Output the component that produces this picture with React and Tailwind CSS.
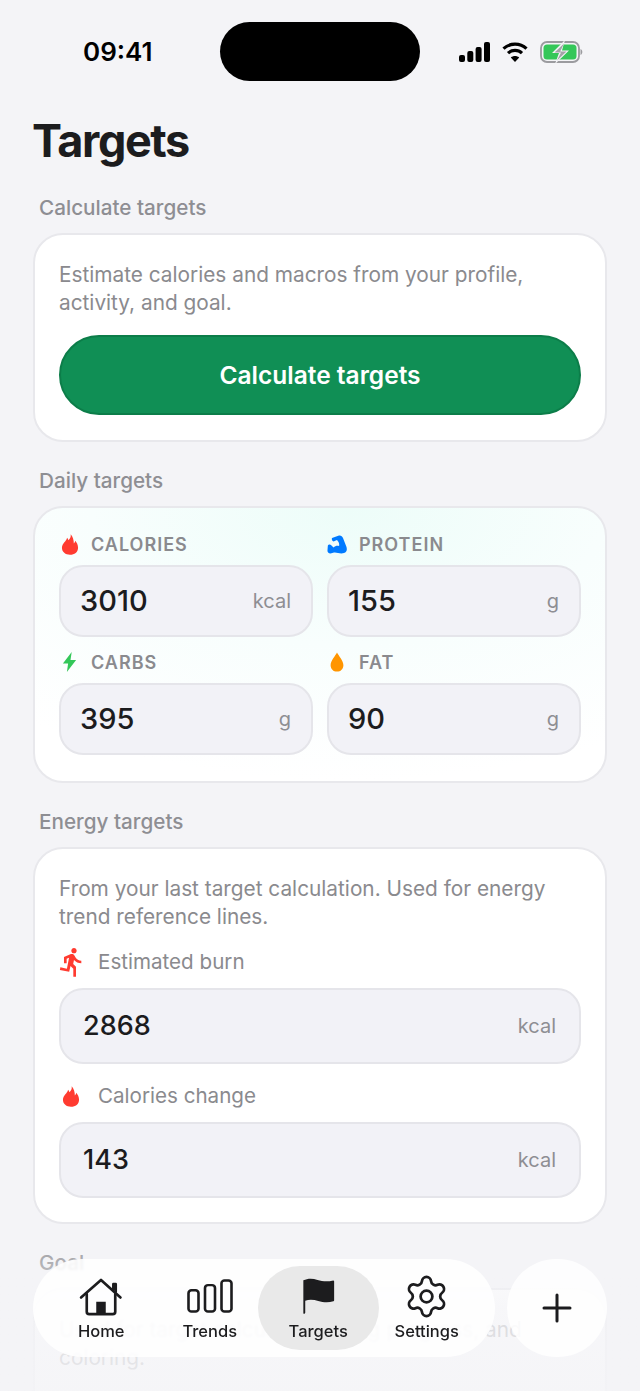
import React from 'react';
import { Settings } from 'lucide-react';
import { MdDirectionsRun } from 'react-icons/md';

const Flame = ({ className }) => (
  <svg viewBox="0 0 20 24" className={className} fill="currentColor">
    <path d="M10.800 0.200c.5 3.200-.9 5-2.500 6.800-.5-1-.9-1.900-1.700-2.700C6.300 8 .8 10.500.8 15.800c0 5 4 7.900 9.200 7.900s9.200-2.900 9.200-8c0-3.400-1.500-6.100-3.200-8-.2 1.400-.7 2.400-1.600 3.200C14.400 6.700 13.300 2.800 10.800 .2z" />
  </svg>
);

const Bolt = ({ className }) => (
  <svg viewBox="0 0 14 20" className={className} fill="currentColor">
    <path d="M9.200 0 .4 11.400h5.200L4.400 20 13.600 8H8z" />
  </svg>
);

const Drop = ({ className }) => (
  <svg viewBox="0 0 14 20" className={className} fill="currentColor">
    <path d="M7 .4C5.600 3.400.6 8.600.6 13.200.6 17 3.400 19.600 7 19.600s6.400-2.600 6.400-6.400C13.400 8.600 8.400 3.400 7 .4z" />
  </svg>
);

const Muscle = ({ className }) => (
  <svg viewBox="0 0 20 19" className={className} fill="currentColor">
    <path d="M5 3 12 .5c2-.3 3.200.8 4 2.500l3.500 9c.8 3 .2 5-2.500 6-4 1.300-7-1-10-.5l-3.500 1C1 18.500.3 17 .5 15l.3-4C1 9.500 3 9 4.500 10.500l2 2C8 11 10 10.500 12 11c.5-1.500 0-3-.5-4L10 5 6.500 6.500C5 6 4.500 4.500 5 3z" />
  </svg>
);

const Signal = () => (
  <svg width="31" height="20" viewBox="0 0 31 20" fill="#000">
    <rect x="0" y="13" width="6" height="7" rx="2" />
    <rect x="8.300" y="9" width="6" height="11" rx="2" />
    <rect x="16.600" y="5" width="6" height="15" rx="2" />
    <rect x="25" y="0" width="6" height="20" rx="2" />
  </svg>
);

const Wifi = () => (
  <svg width="26" height="20" viewBox="0 0 26 20" fill="none" stroke="#000" strokeWidth="3.200">
    <path d="M1.500 6.700C8 .6 18 .6 24.500 6.700" />
    <path d="M6 11.200c4-3.700 10-3.700 14 0" />
    <path d="M13 20l-4.200-4.600c2.400-2 6-2 8.400 0z" fill="#000" stroke="none" />
  </svg>
);

const Battery = () => (
  <svg width="43" height="22" viewBox="0 0 43 22">
    <rect x="1" y="1" width="38" height="20" rx="6" fill="none" stroke="#9b9b9f" strokeWidth="1.800" />
    <rect x="3.500" y="3.500" width="33" height="15" rx="3.500" fill="#34c759" />
    <path d="M40.500 8v6c1.200-.5 1.800-1.600 1.800-3s-.6-2.500-1.800-3z" fill="#9b9b9f" />
    <path d="M25 -1 12 12h7L15 23 29 9.500h-7z" fill="#f4f4f7" />
    <path d="M24 2.500 14.500 11.500h6.500L17 19.500 26.500 10.500h-6.300z" fill="#a3a3a8" />
  </svg>
);

const HomeIcon = () => (
  <svg width="44" height="38" viewBox="0 0 46 40" fill="none" stroke="#1c1c1e" strokeWidth="2.800" strokeLinejoin="round" strokeLinecap="round">
    <path d="M2 20.500 23 2l20.500 18.500" />
    <path d="M8 17v18.500c0 1.600 1 2.600 2.600 2.600h24.800c1.600 0 2.600-1 2.600-2.600V17" />
    <path d="M36 12V6.500h2.500v8" />
    <rect x="18" y="25" width="10" height="13" fill="#1c1c1e" stroke="none" />
  </svg>
);

const TrendsIcon = () => (
  <svg width="46" height="34" viewBox="0 0 46 36" preserveAspectRatio="none" fill="none" stroke="#1c1c1e" strokeWidth="2.600" className="mb-[3px]">
    <rect x="1.500" y="12" width="10" height="22.500" rx="3" />
    <rect x="18" y="6.500" width="10" height="28" rx="3" />
    <rect x="34.500" y="1.500" width="10" height="33" rx="3" />
  </svg>
);

const FlagIcon = () => (
  <svg width="33" height="36" viewBox="0 0 34 38" fill="#1c1c1e" className="mb-[2px]">
    <path d="M1 2.500C6 0 11 .4 16 2c5 1.600 10.500 2.200 16.500.6c.6 0 1 .3 1 .9v20c0 .6-.3.9-.8 1.100-5.500 1.700-11 1.100-16-.4-4.800-1.500-9.700-1.800-13.700-.2V36.500c0 .8-.6 1.300-1.300 1.300S1 37.300 1 36.500z" />
  </svg>
);

const FieldLabel = ({ icon, text }) => (
  <div className="flex items-center h-[24px]">
    <div className="w-[32px] flex items-center justify-start">{icon}</div>
    <span className="text-[18px] font-semibold tracking-[1px] text-[#8a8a8e] uppercase">{text}</span>
  </div>
);

const MacroField = ({ icon, label, value, unit }) => (
  <div className="flex flex-col gap-[9px]">
    <FieldLabel icon={icon} text={label} />
    <div className="h-[72px] rounded-[24px] bg-[#f2f2f7] border-2 border-[#e5e5ea] flex items-center justify-between pl-[19px] pr-[20px]">
      <span className="text-[29px] font-medium text-[#1c1c1e]">{value}</span>
      <span className="text-[20px] text-[#8e8e93]">{unit}</span>
    </div>
  </div>
);

const EnergyField = ({ icon, label, value }) => (
  <div className="flex flex-col gap-[13px]">
    <div className="flex items-center h-[26px]">
      <div className="w-[39px] flex items-center">{icon}</div>
      <span className="text-[20.600px] text-[#8a8a8e]">{label}</span>
    </div>
    <div className="h-[76px] rounded-[24px] bg-[#f2f2f7] border-2 border-[#e5e5ea] flex items-center justify-between pl-[22px] pr-[23px]">
      <span className="text-[27px] font-medium text-[#1c1c1e]">{value}</span>
      <span className="text-[20px] text-[#8e8e93]">kcal</span>
    </div>
  </div>
);

const SectionLabel = ({ children }) => (
  <div className="h-[26px] ml-[6px] text-[20.700px] leading-[26px] font-medium text-[#8e8e93]">{children}</div>
);

const NavItem = ({ icon, label, active }) => (
  <div className="relative flex-1 h-full flex flex-col items-center">
    {active && <div className="absolute inset-y-0 -inset-x-[6px] rounded-full bg-[#e9e9e9]" />}
    <div className="relative h-[50px] flex items-end justify-center">{icon}</div>
    <span className="relative mt-[5px] text-[16.500px] leading-[20px] font-medium text-[#1c1c1e]">{label}</span>
  </div>
);

export default function App() {
  return (
    <div className="relative h-[1391px] overflow-hidden bg-[#f4f4f7] font-['Inter',sans-serif]">
      <div className="h-[100px] relative flex items-start">
        <div className="absolute left-[83px] top-[36px] text-[26px] leading-[32px] font-semibold text-black">09:41</div>
        <div className="absolute left-[220px] top-[22px] w-[200px] h-[59px] rounded-full bg-black" />
        <div className="absolute left-[459px] top-[41px] flex items-center gap-[12px]">
          <Signal />
          <Wifi />
          <Battery />
        </div>
      </div>

      <div className="px-[33px]">
        <h1 className="h-[95px] pt-[14px] -ml-[1px] text-[45px] leading-[54px] font-bold tracking-[-1.400px] text-[#1c1c1e]">Targets</h1>

        <SectionLabel>Calculate targets</SectionLabel>
        <div className="mt-[12px] h-[209px] rounded-[30px] bg-white border-2 border-[#e8e8ec] px-[24px] pt-[26px]">
          <p className="text-[20.800px] leading-[28px] text-[#8a8a8e]">Estimate calories and macros from your profile, activity, and goal.</p>
          <button className="mt-[18px] w-full h-[80px] rounded-full bg-[#108f55] border-2 border-[#0c7d49] text-white text-[24.500px] font-semibold">Calculate targets</button>
        </div>

        <div className="mt-[26px]"><SectionLabel>Daily targets</SectionLabel></div>
        <div className="mt-[12px] h-[277px] rounded-[30px] border-2 border-[#e8e8ec] bg-[radial-gradient(ellipse_90%_100%_at_55%_0%,#edfdf9_0%,#f8fefd_50%,#ffffff_100%)] px-[24px] pt-[24px]">
          <div className="grid grid-cols-2 gap-x-[14px] gap-y-[13px]">
            <MacroField icon={<Flame className="w-[18px] h-[21px] text-[#ff3b30] ml-[2px]" />} label="Calories" value="3010" unit="kcal" />
            <MacroField icon={<Muscle className="w-[20px] h-[19px] text-[#007aff]" />} label="Protein" value="155" unit="g" />
            <MacroField icon={<Bolt className="w-[15px] h-[20px] text-[#34c759] ml-[3px]" />} label="Carbs" value="395" unit="g" />
            <MacroField icon={<Drop className="w-[14px] h-[20px] text-[#ff9500] ml-[3px]" />} label="Fat" value="90" unit="g" />
          </div>
        </div>

        <div className="mt-[26px]"><SectionLabel>Energy targets</SectionLabel></div>
        <div className="mt-[12px] h-[377px] rounded-[30px] bg-white border-2 border-[#e8e8ec] px-[24px] pt-[26px]">
          <p className="text-[20.800px] leading-[28px] text-[#8a8a8e]">From your last target calculation. Used for energy trend reference lines.</p>
          <div className="mt-[18px] flex flex-col gap-[19px]">
            <EnergyField icon={<MdDirectionsRun className="w-[32px] h-[32px] -ml-[3px] text-[#ff3b30]" />} label="Estimated burn" value="2868" />
            <EnergyField icon={<Flame className="w-[18px] h-[21px] text-[#ff3b30] ml-[3px]" />} label="Calories change" value="143" />
          </div>
        </div>

        <div className="mt-[26px]"><SectionLabel>Goal</SectionLabel></div>
        <div className="mt-[12px] h-[200px] rounded-[30px] bg-white border-2 border-[#e8e8ec] px-[24px] pt-[26px]">
          <p className="text-[20.800px] leading-[28px] text-[#8a8a8e]">Used for target calculations, ring progress, and coloring.</p>
        </div>
      </div>

      {/* fade under the floating bar */}
      <div className="absolute inset-x-0 bottom-0 h-[165px] bg-gradient-to-b from-[#f4f4f7]/0 via-[#f4f4f7]/75 to-[#f4f4f7]/90" />

      <div className="absolute left-[33px] top-[1259px] w-[462px] h-[98px] rounded-full bg-white/85 backdrop-blur-[1px] px-[14px] py-[7px] flex">
        <NavItem icon={<HomeIcon />} label="Home" />
        <NavItem icon={<TrendsIcon />} label="Trends" />
        <NavItem icon={<FlagIcon />} label="Targets" active />
        <NavItem icon={<Settings size={47} strokeWidth={1.400} color="#1c1c1e" className="-mb-[4px]" />} label="Settings" />
      </div>

      <div className="absolute left-[507px] top-[1259px] w-[100px] h-[98px] rounded-full bg-white/85 flex items-center justify-center">
        <svg width="30" height="30" viewBox="0 0 30 30" stroke="#1c1c1e" strokeWidth="3" strokeLinecap="round">
          <path d="M15 2v26M2 15h26" />
        </svg>
      </div>
    </div>
  );
}
